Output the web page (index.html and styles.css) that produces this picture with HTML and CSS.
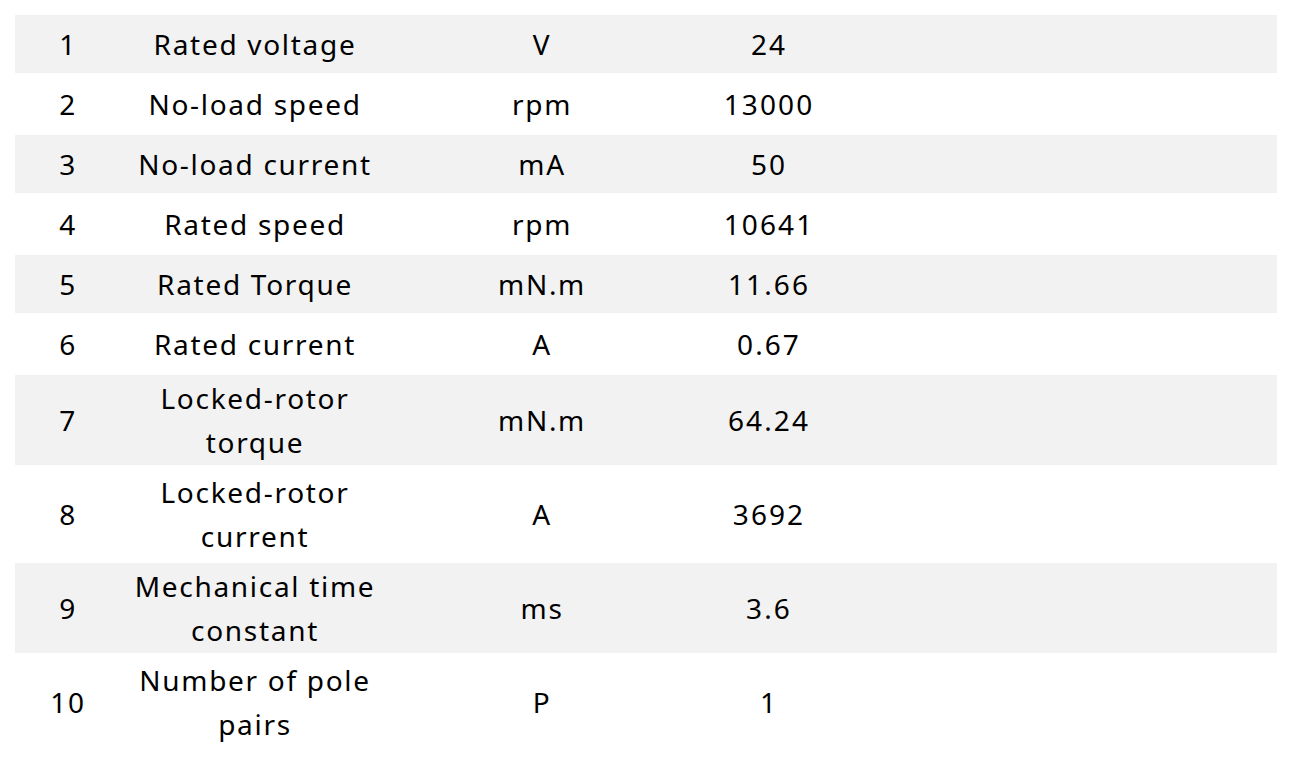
FILE: index.html
```html
<!DOCTYPE html>
<html>
<head>
<meta charset="utf-8">
<link rel="stylesheet" href="styles.css">
</head>
<body>
<table class="spec">
  <colgroup>
    <col class="c-no"><col class="c-name"><col class="c-unit"><col class="c-val"><col class="c-rest">
  </colgroup>
  <tbody>
    <tr class="odd"><td>1</td><td>Rated voltage</td><td>V</td><td>24</td><td></td></tr>
    <tr class="even"><td>2</td><td>No-load speed</td><td>rpm</td><td>13000</td><td></td></tr>
    <tr class="odd"><td>3</td><td>No-load current</td><td>mA</td><td>50</td><td></td></tr>
    <tr class="even"><td>4</td><td>Rated speed</td><td>rpm</td><td>10641</td><td></td></tr>
    <tr class="odd"><td>5</td><td>Rated Torque</td><td>mN.m</td><td>11.66</td><td></td></tr>
    <tr class="even"><td>6</td><td>Rated current</td><td>A</td><td>0.67</td><td></td></tr>
    <tr class="odd tall"><td>7</td><td>Locked-rotor torque</td><td>mN.m</td><td>64.24</td><td></td></tr>
    <tr class="even tall"><td>8</td><td>Locked-rotor current</td><td>A</td><td>3692</td><td></td></tr>
    <tr class="odd tall"><td>9</td><td>Mechanical time constant</td><td>ms</td><td>3.6</td><td></td></tr>
    <tr class="even tall"><td>10</td><td>Number of pole pairs</td><td>P</td><td>1</td><td></td></tr>
  </tbody>
</table>
</body>
</html>
```
FILE: styles.css
```css
html, body {
  margin: 0;
  padding: 0;
  background: #ffffff;
}
body {
  padding: 15px 15px 0 15px;
  font-family: "Noto Sans", "Open Sans", sans-serif;
  font-size: 28px;
  color: #000000;
}
.spec {
  width: 1262px;
  border-collapse: collapse;
  table-layout: fixed;
}
.c-no { width: 104px; }
.c-name { width: 270px; }
.c-unit { width: 304px; }
.c-val { width: 150px; }
.c-rest { width: auto; }
.spec td {
  padding: 0 6px 0 8px;
  text-align: center;
  vertical-align: middle;
  line-height: 44px;
  letter-spacing: 1.7px;
}
.spec td:nth-child(4) { padding: 0 0 0 2px; letter-spacing: 2.1px; }
.odd { background: #f2f2f2; height: 58px; }
.even { background: #ffffff; height: 62px; }
.odd.tall { height: 90px; }
.even.tall { height: 98px; }
```
